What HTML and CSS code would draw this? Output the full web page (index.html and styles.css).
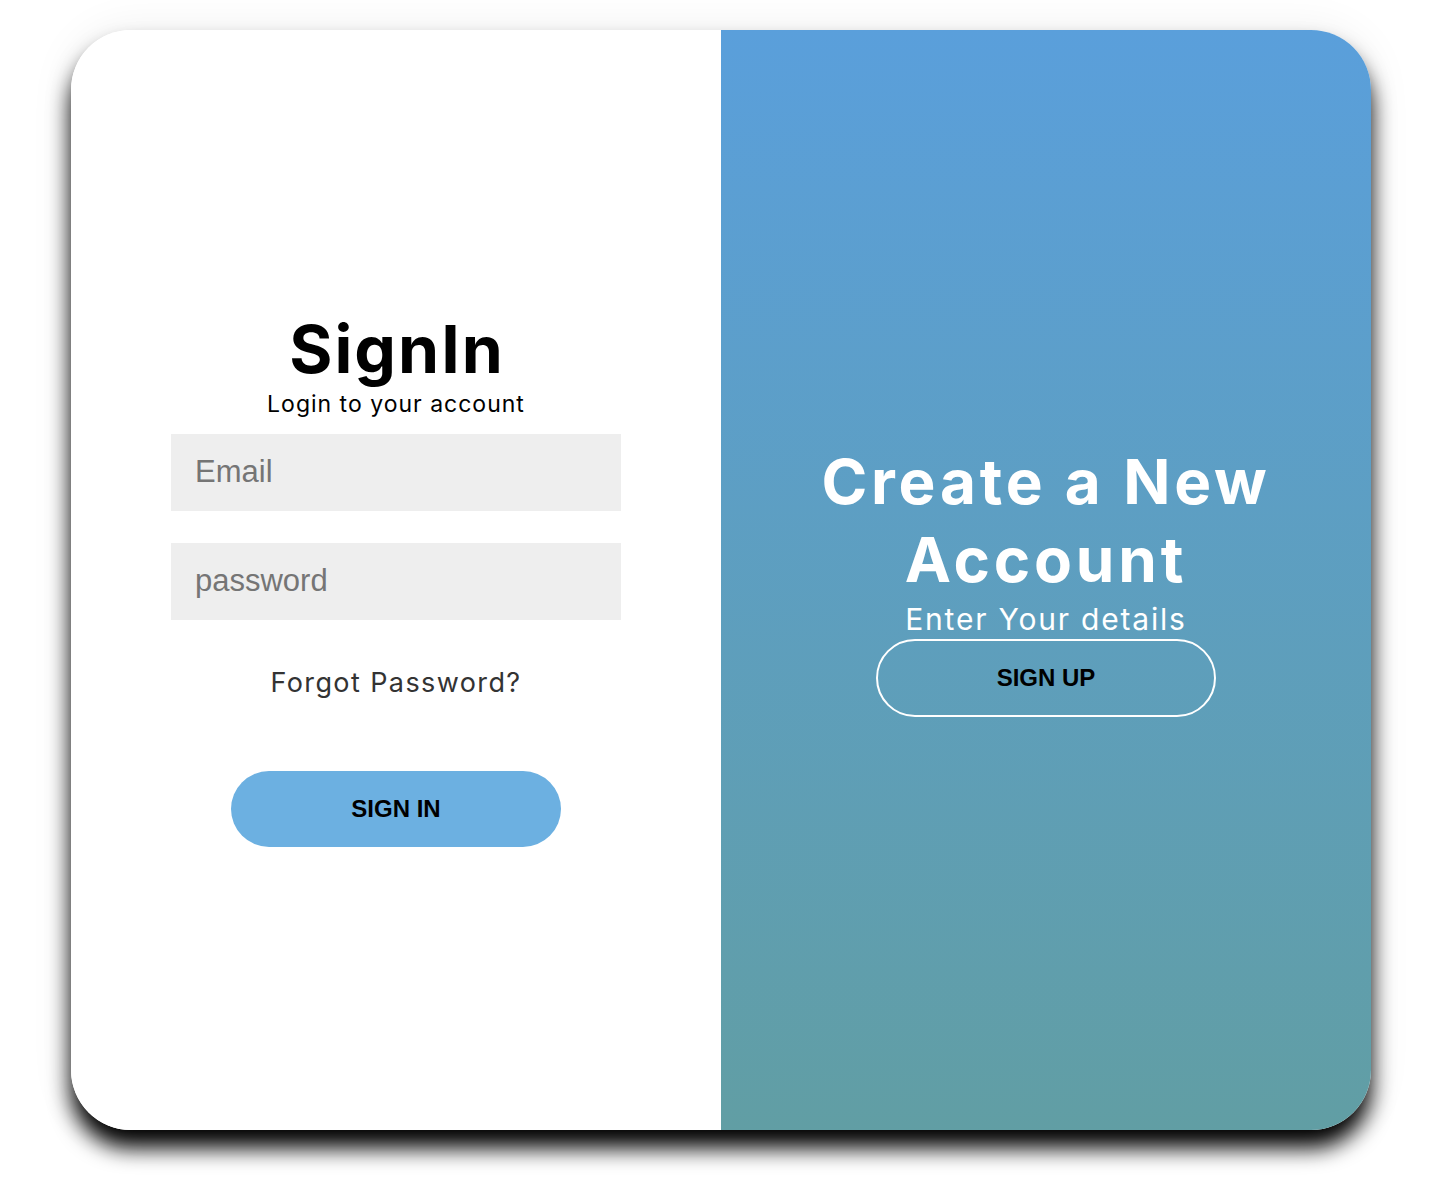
FILE: index.html
```html
<!DOCTYPE html>
<html lang="en">
<head>
<meta charset="utf-8">
<title>Sign In</title>
<link rel="stylesheet" href="styles.css">
</head>
<body>
<div class="card">
  <section class="panel panel-signin">
    <h1 class="title">SignIn</h1>
    <p class="subtitle">Login to your account</p>
    <input class="field" type="email" placeholder="Email">
    <input class="field field-gap" type="password" placeholder="password">
    <a class="forgot" href="#">Forgot Password?</a>
    <button class="btn btn-signin" type="button">SIGN IN</button>
  </section>
  <section class="panel panel-signup">
    <h2 class="title-large">Create a New Account</h2>
    <p class="details">Enter Your details</p>
    <button class="btn btn-signup" type="button">SIGN UP</button>
  </section>
</div>
</body>
</html>
```
FILE: styles.css
```css
html, body {
  margin: 0;
  padding: 0;
  background: #ffffff;
}

body {
  padding: 30px 0 48px 71px;
  font-family: "Inter", "Liberation Sans", sans-serif;
}

.card {
  width: 1300px;
  height: 1100px;
  display: flex;
  border-radius: 60px;
  overflow: hidden;
  box-shadow: 0 18px 22px rgba(0, 0, 0, 1), 0 0 45px rgba(0, 0, 0, 0.07);
}

.panel {
  flex: 0 0 50%;
  box-sizing: border-box;
  display: flex;
  flex-direction: column;
  align-items: center;
  justify-content: center;
  text-align: center;
}

.panel-signin {
  background: #ffffff;
}

.panel-signup {
  background: linear-gradient(to bottom, #5a9fdb 0%, #619ea4 100%);
  padding: 0 40px;
  color: #ffffff;
}

.title {
  margin: 0;
  font-size: 66px;
  line-height: 70px;
  font-weight: 700;
  letter-spacing: 2px;
  text-indent: 2px;
  color: #000;
}

.subtitle {
  margin: 6px 0 0;
  font-size: 23px;
  line-height: 28px;
  font-weight: 400;
  letter-spacing: 1px;
  color: #000;
}

.field {
  margin-top: 16px;
  width: 450px;
  height: 77px;
  box-sizing: border-box;
  padding: 0 24px;
  border: none;
  outline: none;
  background: #eeeeee;
  font-family: "Liberation Sans", Arial, sans-serif;
  font-size: 31px;
  color: #333;
}

.field::placeholder {
  color: #757575;
}

.field-gap {
  margin-top: 32px;
}

.forgot {
  margin-top: 46px;
  font-size: 27px;
  line-height: 34px;
  font-weight: 400;
  letter-spacing: 1.4px;
  color: #333333;
  text-decoration: none;
}

.btn {
  font-family: "Liberation Sans", Arial, sans-serif;
  font-weight: 700;
  font-size: 24px;
  color: #000;
  border-radius: 40px;
  cursor: pointer;
}

.btn-signin {
  margin-top: 71px;
  width: 330px;
  height: 76px;
  border: none;
  background: #6cb0e1;
}

.title-large {
  margin: 0;
  font-size: 62px;
  line-height: 78px;
  font-weight: 700;
  letter-spacing: 3.8px;
  color: #ffffff;
}

.details {
  margin: 3px 0 0;
  font-size: 30px;
  line-height: 34px;
  font-weight: 400;
  letter-spacing: 1.8px;
}

.btn-signup {
  margin-top: 3px;
  width: 340px;
  height: 78px;
  border: 2px solid #ffffff;
  background: transparent;
}
```
